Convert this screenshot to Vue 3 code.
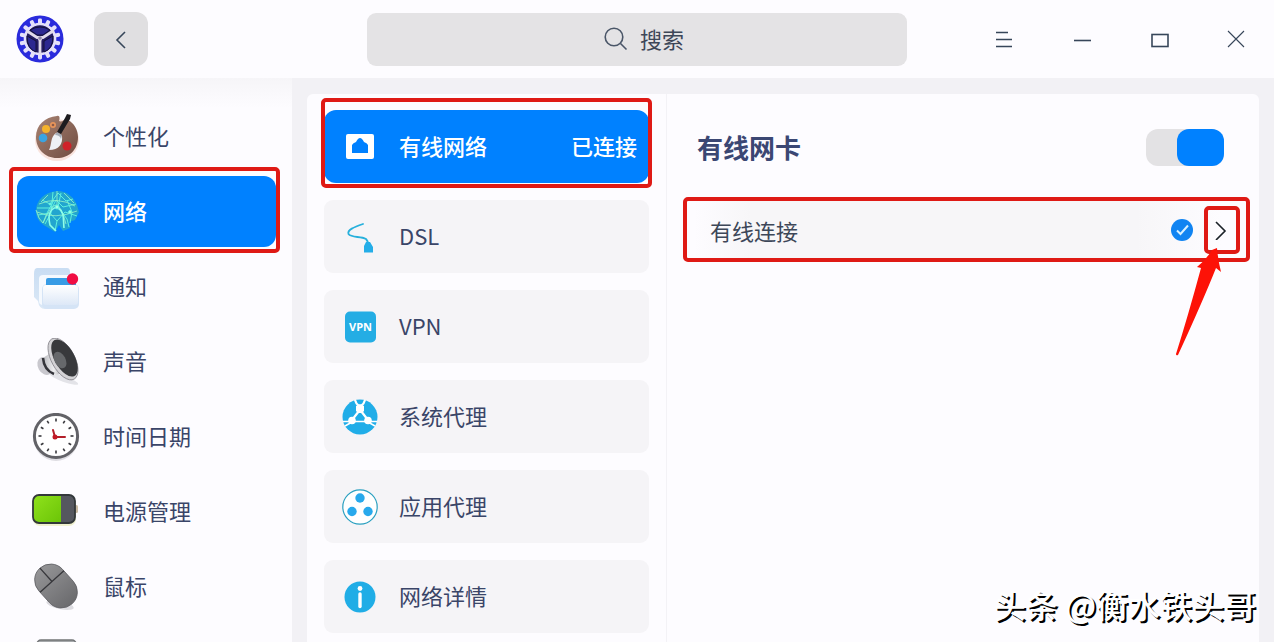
<template>
  <div class="window">
    <header class="titlebar">
      <div class="titlebar-left">
        <svg class="logo" viewBox="0 0 48 48" aria-hidden="true">
          <circle cx="24" cy="24" r="23.5" fill="#2a2bdc" />
          <g fill="#e4e0fa">
            <rect v-for="n in 14" :key="n" x="22" y="3.5" width="4" height="8" rx="1.4" :transform="`rotate(${n * 25.714} 24 24)`" />
          </g>
          <circle cx="24" cy="24" r="15" fill="#241c62" stroke="#e4e0fa" stroke-width="2.6" />
          <path d="M14 15q10-6 20 0l-7 5h-6zM11 21l9 5v11q-9-3-9-16zM37 21l-9 5v11q9-3 9-16z" fill="#2c2890" stroke="#14123c" stroke-width="1" />
          <path d="M11 16l10 6.500M37 16l-10 6.500M24 26v12" stroke="#e2dcea" stroke-width="2.800" stroke-linecap="round" />
          <path d="M20 21h8l-4 7z" fill="#e2dcea" />
          <circle cx="24" cy="23" r="1.800" fill="#8c82a8" />
        </svg>
        <button class="back" type="button" aria-label="返回">
          <svg viewBox="0 0 20 20"><path d="M14 3L6 11l8 8" /></svg>
        </button>
      </div>

      <label class="search">
        <svg viewBox="0 0 24 24" aria-hidden="true">
          <circle cx="10" cy="10" r="8.800" />
          <path d="M16.500 16.500l6 6" />
        </svg>
        <input type="text" placeholder="搜索" aria-label="搜索" />
      </label>

      <div class="controls">
        <button type="button" aria-label="菜单">
          <svg viewBox="0 0 20 20"><path d="M1 3.500h12M1 10.500h16M1 17.500h16" /></svg>
        </button>
        <button type="button" aria-label="最小化">
          <svg viewBox="0 0 20 20"><path d="M2 11.500h17" /></svg>
        </button>
        <button type="button" aria-label="最大化">
          <svg viewBox="0 0 20 20"><rect x="3" y="5.500" width="16" height="12" /></svg>
        </button>
        <button type="button" aria-label="关闭">
          <svg class="thin" viewBox="0 0 20 20"><path d="M2 2l16 16M18 2L2 18" /></svg>
        </button>
      </div>
    </header>

    <div class="body">
      <nav class="sidebar">
        <button
          v-for="item in modules"
          :key="item.id"
          type="button"
          class="module"
          :class="{ active: item.id === currentModule, marked: item.id === 'network' }"
          @click="currentModule = item.id"
        >
          <svg class="module-icon" viewBox="0 0 48 48" aria-hidden="true">
            <g v-if="item.id === 'personal'">
              <ellipse cx="25" cy="27" rx="22" ry="21" fill="#f6d9cf" opacity=".7" />
              <path d="M25 3c3-1 3 3 2 5 3 2 6-3 9-1 6 3 10 10 10 17 0 13-9 21-21 21S4 36 4 24 13 4 25 3z" fill="url(#wood)" />
              <circle cx="14" cy="16" r="4" fill="#f4b22c" />
              <circle cx="21" cy="12" r="3" fill="#e8955a" />
              <circle cx="21" cy="12" r="1.300" fill="#8b5b4b" />
              <circle cx="11" cy="25" r="4.300" fill="#3aa4e2" />
              <circle cx="35" cy="33" r="4.500" fill="#cf2229" />
              <path d="M35 1l4 1-1 4-9 15-4-2 8-14z" fill="#1d1c20" />
              <path d="M24 20l6 3c1 8-3 14-13 14 3-5 1-13 7-17z" fill="#eef1f6" />
              <path d="M25 19l5 3-1 4c-1-3-3-4-6-4z" fill="#a5adb8" />
            </g>
            <g v-else-if="item.id === 'network'" fill="none" stroke="#5ff0e0" stroke-width="1">
              <path d="M25 3c11 0 17 7 20 14l2 7-4 8-6 2 1 6-7 3-4-6-4 7-8-5C9 36 4 31 4 23 4 12 13 4 25 3z" fill="#22a5cf" stroke="none" />
              <path d="M5 20h15l4-8 7 7 13-3M6 27l12-2 7 8 8-9 12 4M10 12l8 4 8-11 8 8 7-2M13 36l6-11 2-21M25 33l-2 10M22 12l-7 13-4 10M29 5l-3 14 9 12 2 8M35 12l5 12-2 11" />
              <path d="M7 16q18-8 36 2M5 24q18 8 40-1M11 35q8-18 13-18t10 19M25 3v16M4 22l3 8 4 5M16 7l-7 7M32 5l10 10" stroke="#9af5c9" stroke-width=".8" />
              <path d="M25 19c-8 2-9 10-7 18l6 6M26 20c7 4 5 12 6 20" stroke="#8effe9" stroke-width="1.600" />
              <circle cx="25" cy="19" r="2" fill="#a6ffe5" />
              <circle cx="18" cy="16" r="1" fill="#a6ffe5" />
              <circle cx="38" cy="24" r="1.500" fill="#a6ffe5" />
            </g>
            <g v-else-if="item.id === 'notification'">
              <path d="M5 5h30q3 0 3 4v31q0 5-5 6H13q-6 0-7-8l-4-4V11q0-6 3-6z" fill="url(#sheet)" />
              <rect x="7" y="12" width="37" height="30" rx="4" fill="#f5f9fe" />
              <rect x="10" y="21" width="37" height="25" rx="5" fill="#d5e4f6" />
              <rect x="14" y="15" width="30" height="9" rx="2" fill="#389ce5" />
              <rect x="11" y="22" width="35" height="20" rx="3" fill="url(#card)" />
              <circle cx="40.500" cy="16" r="5.700" fill="#f10d43" />
            </g>
            <g v-else-if="item.id === 'sound'">
              <ellipse cx="32" cy="41" rx="15" ry="3" transform="rotate(20 32 41)" fill="#e3e3e8" />
              <ellipse cx="13" cy="28" rx="7" ry="9.500" transform="rotate(-29 13 28)" fill="#c9c8ce" />
              <path d="M11 20l12-8 10 23-11 2q-10-6-11-17z" fill="url(#metal)" />
              <path d="M11 20q1 12 11 16" fill="none" stroke="#34343a" stroke-width="2.600" />
              <ellipse cx="31" cy="21" rx="11.500" ry="23" transform="rotate(-29 31 21)" fill="#d3d2d5" stroke="#88868c" stroke-width=".8" />
              <ellipse cx="32.500" cy="20" rx="10" ry="20.500" transform="rotate(-29 32.500 20)" fill="#38393c" />
              <ellipse cx="28" cy="22" rx="5.500" ry="9" transform="rotate(-29 28 22)" fill="#66686b" />
            </g>
            <g v-else-if="item.id === 'time'">
              <circle cx="24" cy="26" r="22" fill="#dedde2" />
              <circle cx="24" cy="23" r="21.600" fill="#fff" stroke="#626267" stroke-width="3" />
              <path v-for="n in 12" :key="n" d="M24 5.500v3" stroke="#38383c" stroke-width="1.600" :transform="`rotate(${n * 30} 24 23)`" />
              <path d="M23 24l-2-7M23 24h10" stroke="#b3202a" stroke-width="2" stroke-linecap="round" />
              <circle cx="23" cy="24" r="2.500" fill="#c21926" />
            </g>
            <g v-else-if="item.id === 'power'">
              <rect x="1" y="9" width="43" height="29" rx="7" fill="#f0f1cf" />
              <rect x="43" y="17" width="3" height="8" rx="1.500" fill="#c8b9a2" />
              <rect x="1" y="7" width="42" height="28" rx="6" fill="#55575f" />
              <path d="M7 7h22v28H7q-6 0-6-6V13q0-6 6-6z" fill="url(#charge)" />
              <rect x="1" y="7" width="42" height="28" rx="6" fill="none" stroke="#33383a" stroke-width="1.800" />
            </g>
            <g v-else-if="item.id === 'mouse'">
              <ellipse cx="28" cy="42" rx="14" ry="4" transform="rotate(12 28 42)" fill="#dddce1" />
              <g transform="rotate(-42 24 23)">
                <rect x="8" y="-1" width="32" height="48" rx="16" fill="url(#shell)" stroke="#606064" stroke-width=".8" />
                <path d="M8 17h32M24-1v18" stroke="#37373b" stroke-width="1.300" />
              </g>
            </g>
            <g v-else>
              <rect x="5" y="2" width="39" height="36" rx="4" fill="#a5a8aa" stroke="#717476" stroke-width="1.500" />
            </g>
          </svg>
          <span v-if="item.label" class="label">{{ item.label }}</span>
        </button>
      </nav>

      <main class="content">
        <section class="sections">
          <button
            v-for="item in sections"
            :key="item.id"
            type="button"
            class="section"
            :class="{ active: item.id === currentSection, marked: item.id === 'wired' }"
            @click="currentSection = item.id"
          >
            <svg class="section-icon" viewBox="0 0 36 36" aria-hidden="true">
              <g v-if="item.id === 'wired'">
                <rect x="4" y="5" width="28" height="25" rx="2" fill="#fff" />
                <path d="M10 24v-8q1-2 4-3 2-4 4-4t4 4q3 1 4 3v8z" fill="#0081ff" />
              </g>
              <g v-else-if="item.id === 'dsl'">
                <path d="M21 5C12 8 5 11 6.500 15c3 4 12 2 17.500 5q2 2 2 5" fill="none" stroke="#27b0dc" stroke-width="1.800" stroke-linecap="round" />
                <path d="M24 23h4l3 5v5.500h-9V27z" fill="#24ade8" />
              </g>
              <g v-else-if="item.id === 'vpn'">
                <rect x="3" y="2.500" width="31" height="31" rx="5" fill="#24ade4" />
                <text x="18.500" y="22" text-anchor="middle" fill="#fff" font-size="11" font-weight="700" font-family="Open Sans, sans-serif">VPN</text>
              </g>
              <g v-else-if="item.id === 'system-proxy'">
                <circle cx="18" cy="18" r="17.500" fill="#20ade8" />
                <path d="M13 1q1 4 4 6v5L10 21M23 1q-1 4-4 6v5l7 9" fill="none" stroke="#fff" stroke-width="2.200" />
                <path d="M18 5l4 2v5l-2 2h-4l-2-2V7z" fill="#fff" />
                <path d="M1 22.500h34M3 27l7-4M33 27l-7-4" stroke="#fff" stroke-width="1.600" />
                <circle cx="10" cy="21.500" r="3.800" fill="#fff" />
                <circle cx="26" cy="21.500" r="3.800" fill="#fff" />
              </g>
              <g v-else-if="item.id === 'app-proxy'" fill="#28a9ec">
                <circle cx="18" cy="18" r="17.200" fill="#fff" stroke="#2ba0c0" stroke-width="1.200" />
                <circle cx="18" cy="9" r="4.700" />
                <circle cx="10" cy="22.500" r="4.700" />
                <circle cx="26" cy="22.500" r="4.700" />
              </g>
              <g v-else>
                <circle cx="18" cy="18" r="15.500" fill="#20ade6" />
                <circle cx="18" cy="9.500" r="2.400" fill="#fff" />
                <path d="M18 15v12.500" stroke="#fff" stroke-width="3.400" stroke-linecap="round" />
              </g>
            </svg>
            <span class="section-name label">{{ item.label }}</span>
            <span v-if="item.status" class="label">{{ item.status }}</span>
          </button>
        </section>

        <section class="detail">
          <div class="adapter">
            <h1 id="adapter-title">有线网卡</h1>
            <input v-model="enabled" class="switch" type="checkbox" role="switch" aria-labelledby="adapter-title" />
          </div>

          <div class="connection">
            <span class="connection-name">有线连接</span>
            <svg class="check" viewBox="0 0 22 22" role="img" aria-label="已连接">
              <circle cx="11" cy="11" r="11" fill="#1084f2" />
              <path d="M6 11.500l3.500 3.500L17 6.500" />
            </svg>
            <button class="more" type="button" aria-label="详情">
              <svg viewBox="0 0 20 20"><path d="M4 2l9 9-9 9" /></svg>
            </button>
            <svg class="arrow" viewBox="0 0 50 112" aria-hidden="true">
              <path d="M43 2q1 12 4 24l-5-4Q28 57 4 109q-2 1-2-1Q14 70 27 22l-4-1Q32 14 38 4z" fill="#fd1207" />
            </svg>
          </div>
        </section>
      </main>
    </div>

    <p class="signature">头条 @衡水铁头哥</p>

    <!-- Shared gradients for the sidebar icons -->
    <svg class="defs" aria-hidden="true">
      <defs>
        <linearGradient id="wood" x2="1" y2="1"><stop stop-color="#a88373" /><stop offset="1" stop-color="#704c41" /></linearGradient>
        <linearGradient id="sheet" x2="0" y2="1"><stop stop-color="#c9ddf3" /><stop offset="1" stop-color="#dbe8f6" /></linearGradient>
        <linearGradient id="card" x2="0" y2="1"><stop stop-color="#fff" /><stop offset="1" stop-color="#dde8f7" /></linearGradient>
        <linearGradient id="metal" x2="1" y2="0"><stop stop-color="#b9b9be" /><stop offset=".5" stop-color="#eeeef0" /><stop offset="1" stop-color="#8d8d91" /></linearGradient>
        <linearGradient id="charge" x2="1" y2="1"><stop stop-color="#90e21c" /><stop offset="1" stop-color="#6bc407" /></linearGradient>
        <linearGradient id="shell" x2="0" y2="1"><stop stop-color="#949496" /><stop offset="1" stop-color="#6b6b6e" /></linearGradient>
      </defs>
    </svg>
  </div>
</template>

<script setup>
import { ref } from 'vue';

const modules = [
  { id: 'personal', label: '个性化' },
  { id: 'network', label: '网络' },
  { id: 'notification', label: '通知' },
  { id: 'sound', label: '声音' },
  { id: 'time', label: '时间日期' },
  { id: 'power', label: '电源管理' },
  { id: 'mouse', label: '鼠标' },
  { id: 'more', label: '' }
];

const sections = [
  { id: 'wired', label: '有线网络', status: '已连接' },
  { id: 'dsl', label: 'DSL' },
  { id: 'vpn', label: 'VPN' },
  { id: 'system-proxy', label: '系统代理' },
  { id: 'app-proxy', label: '应用代理' },
  { id: 'details', label: '网络详情' }
];

const currentModule = ref('network');
const currentSection = ref('wired');
const enabled = ref(true);
</script>

<style>
body {
  margin: 0;
  background: #f2f1f5;
}
</style>

<style scoped>
.window {
  position: relative;
  display: flex;
  flex-direction: column;
  height: 100vh;
  overflow: hidden;
  color: #3a4568;
  font-family: "Noto Sans CJK SC", "Noto Sans", sans-serif;
  font-size: 22px;
  line-height: 32px;
}

*,
*::before,
*::after {
  box-sizing: border-box;
}

button {
  padding: 0;
  border: 0;
  background: none;
  color: inherit;
  font: inherit;
  text-align: left;
  cursor: pointer;
}

svg {
  display: block;
  flex: none;
}

.titlebar {
  display: grid;
  grid-template-columns: 1fr minmax(0, 540px) 1fr;
  align-items: center;
  flex: none;
  height: 78px;
  background: #fdfcff;
}

.titlebar-left {
  display: flex;
  align-items: center;
  gap: 30px;
  padding-left: 16px;
}

.logo {
  width: 48px;
  height: 48px;
}

.back {
  display: grid;
  place-items: center;
  width: 54px;
  height: 54px;
  border-radius: 12px;
  background: #e0dfe1;
}

.back svg,
.controls svg {
  width: 20px;
  height: 20px;
  fill: none;
  stroke: #37465a;
  stroke-width: 1.6;
}

.search {
  display: flex;
  align-items: center;
  justify-content: center;
  gap: 12px;
  height: 53px;
  padding-left: 14px;
  border-radius: 9px;
  background: #e4e3e5;
}

.search svg {
  width: 24px;
  height: 24px;
  fill: none;
  stroke: #4a5668;
  stroke-width: 1.6;
}

.search input {
  field-sizing: content;
  padding: 0 0 2px;
  border: 0;
  outline: 0;
  background: none;
  color: #3d4758;
  font: inherit;
}

.search input::placeholder {
  color: #3d4758;
}

.controls {
  display: flex;
  justify-content: flex-end;
  gap: 37px;
  padding-right: 18px;
}

.controls button {
  display: grid;
  place-items: center;
  width: 40px;
  height: 40px;
}

.controls svg.thin {
  stroke-width: 1.1;
}

.body {
  display: flex;
  flex: 1;
  gap: 15px;
  min-height: 0;
  padding-right: 15px;
}

.sidebar {
  display: flex;
  flex-direction: column;
  flex: none;
  gap: 4px;
  width: 292px;
  padding: 23px 16px 0 17px;
  overflow: hidden;
  background: linear-gradient(#f6f5f8, #fdfcff 30px);
}

.module {
  position: relative;
  display: flex;
  align-items: center;
  flex: none;
  gap: 23px;
  height: 71px;
  padding-left: 15px;
  border-radius: 12px;
}

.module-icon {
  width: 48px;
  height: 48px;
}

.module.active,
.section.active {
  background: #0081ff;
  color: #fff;
  font-weight: 500;
}

/* Lifts the text to the optical centre of its row */
.label {
  padding-bottom: 4px;
}

/* Red frames drawn round the highlighted entries */
.marked::after,
.connection::after,
.more::after {
  content: "";
  position: absolute;
  border: 4px solid #df1a15;
  border-radius: 5px;
  pointer-events: none;
}

.module.marked::after {
  inset: -9px -4px -6px -8px;
}

.content {
  display: flex;
  flex: 1;
  min-width: 0;
  margin-top: 16px;
  border-radius: 6px 6px 0 0;
  background: #fdfcff;
}

.sections {
  display: flex;
  flex-direction: column;
  flex: none;
  gap: 17px;
  width: 360px;
  padding: 16px 17px 0;
  border-right: 1px solid #f3f2f6;
}

.section {
  position: relative;
  display: flex;
  align-items: center;
  flex: none;
  gap: 21px;
  height: 73px;
  padding: 0 12px 0 18px;
  border-radius: 9px;
  background: #f5f4f7;
}

.section.active {
  border-radius: 12px;
}

.section.marked::after {
  inset: -12px -3px -5px;
}

.section-icon {
  width: 36px;
  height: 36px;
}

.section-name {
  flex: 1;
}

.detail {
  flex: 1;
  min-width: 0;
  padding: 33px 9px 0 16px;
}

.adapter {
  display: flex;
  align-items: center;
  justify-content: space-between;
  margin-bottom: 30px;
  padding: 0 26px 0 14px;
}

h1 {
  margin: 0;
  color: #3b4773;
  font-size: 26px;
  font-weight: 700;
  line-height: 40px;
}

.switch {
  display: flex;
  justify-content: flex-start;
  appearance: none;
  width: 78px;
  height: 37px;
  margin: 0;
  border-radius: 12px;
  background: #e3e2e4;
  cursor: pointer;
}

.switch::before {
  content: "";
  width: 47px;
  border-radius: 12px;
  background: #b9b8bc;
}

.switch:checked {
  justify-content: flex-end;
}

.switch:checked::before {
  background: #0081ff;
}

.connection {
  position: relative;
  display: flex;
  align-items: center;
  height: 65px;
  padding: 0 10px 0 27px;
  border-radius: 5px;
  background: linear-gradient(90deg, #fdfcff 2%, #f7f6f8 12%, #f7f6f8 80%, #fdfcff 95%);
}

.connection::after {
  inset: 0;
}

.connection-name {
  flex: 1;
  color: #3d4758;
}

.check {
  width: 22px;
  height: 22px;
  margin-right: 11px;
}

.check path {
  fill: none;
  stroke: #d8f1ff;
  stroke-width: 2;
}

.more {
  position: relative;
  display: grid;
  place-items: center;
  width: 36px;
  height: 48px;
}

.more::after {
  inset: 0;
}

.more svg {
  width: 20px;
  height: 20px;
  fill: none;
  stroke: #1b2228;
  stroke-width: 1.6;
}

.arrow {
  position: absolute;
  top: 49px;
  right: 26px;
  z-index: 1;
  width: 50px;
  height: 112px;
}

.signature {
  position: absolute;
  right: 18px;
  bottom: 14px;
  margin: 0;
  color: #fff;
  font-size: 32px;
  font-weight: 500;
  line-height: 48px;
  text-shadow: 2px 2px 0 #000;
}

.defs {
  position: absolute;
  width: 0;
  height: 0;
}
</style>
